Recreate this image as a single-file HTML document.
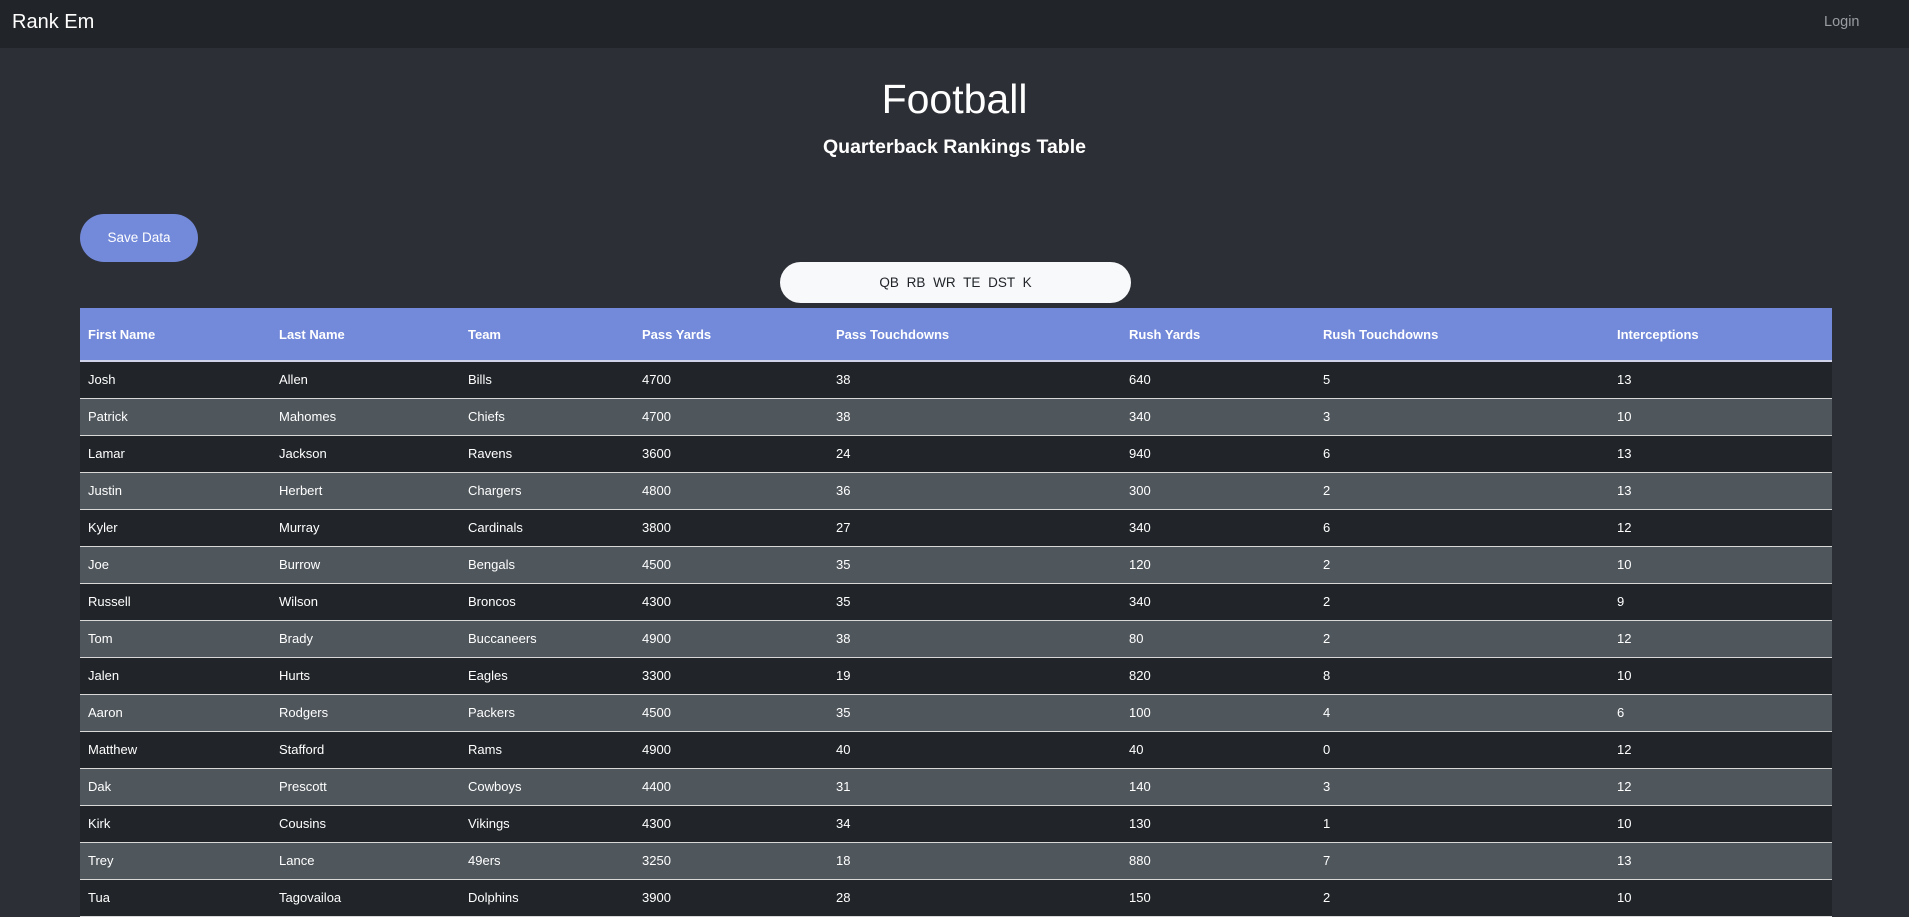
<!DOCTYPE html>
<html><head><meta charset="utf-8"><style>
*{box-sizing:border-box;margin:0;padding:0}
body{width:1909px;height:894px;overflow:hidden;background:#2c2f35;font-family:"Liberation Sans",sans-serif;color:#fff;position:relative}
.nav{height:48px;background:#212428;position:relative}
.brand{position:absolute;left:12px;top:11px;font-size:20px;color:#fff}
.login{position:absolute;left:1824px;top:14px;font-size:14.5px;color:#9a9da1}
h1{position:absolute;top:76px;width:100%;text-align:center;font-weight:400;font-size:41px}
h2{position:absolute;top:136px;width:100%;text-align:center;font-weight:700;font-size:19.5px}
.save{position:absolute;left:80px;top:214px;width:118px;height:48px;border-radius:24px;background:#7389d9;font-size:13.5px;text-align:center;line-height:48px}
.pill{position:absolute;left:780px;top:262px;width:351px;height:41px;border-radius:21px;background:#f8f9fa;color:#212529;font-size:13.5px;text-align:center;line-height:41px;word-spacing:4px}
table{position:absolute;left:80px;top:308px;width:1752px;border-collapse:collapse;font-size:13px}
th{background:#7389d9;height:53px;text-align:left;font-weight:700;padding:0 8px;border-bottom:2px solid #d0d4e8}
td{height:37px;padding:0 8px;border-bottom:1.5px solid #d8d8d8}
tr:nth-child(odd) td{background:#212529}
tr:nth-child(even) td{background:#4f565c}
</style></head><body>
<div class="nav"><span class="brand">Rank Em</span><span class="login">Login</span></div>
<h1>Football</h1>
<h2>Quarterback Rankings Table</h2>
<div class="save">Save Data</div>
<div class="pill">QB RB WR TE DST K</div>
<table>
<colgroup><col style="width:191px"><col style="width:189px"><col style="width:174px"><col style="width:194px"><col style="width:293px"><col style="width:194px"><col style="width:294px"><col style="width:223px"></colgroup>
<thead><tr><th>First Name</th><th>Last Name</th><th>Team</th><th>Pass Yards</th><th>Pass Touchdowns</th><th>Rush Yards</th><th>Rush Touchdowns</th><th>Interceptions</th></tr></thead>
<tbody>
<tr><td>Josh</td><td>Allen</td><td>Bills</td><td>4700</td><td>38</td><td>640</td><td>5</td><td>13</td></tr>
<tr><td>Patrick</td><td>Mahomes</td><td>Chiefs</td><td>4700</td><td>38</td><td>340</td><td>3</td><td>10</td></tr>
<tr><td>Lamar</td><td>Jackson</td><td>Ravens</td><td>3600</td><td>24</td><td>940</td><td>6</td><td>13</td></tr>
<tr><td>Justin</td><td>Herbert</td><td>Chargers</td><td>4800</td><td>36</td><td>300</td><td>2</td><td>13</td></tr>
<tr><td>Kyler</td><td>Murray</td><td>Cardinals</td><td>3800</td><td>27</td><td>340</td><td>6</td><td>12</td></tr>
<tr><td>Joe</td><td>Burrow</td><td>Bengals</td><td>4500</td><td>35</td><td>120</td><td>2</td><td>10</td></tr>
<tr><td>Russell</td><td>Wilson</td><td>Broncos</td><td>4300</td><td>35</td><td>340</td><td>2</td><td>9</td></tr>
<tr><td>Tom</td><td>Brady</td><td>Buccaneers</td><td>4900</td><td>38</td><td>80</td><td>2</td><td>12</td></tr>
<tr><td>Jalen</td><td>Hurts</td><td>Eagles</td><td>3300</td><td>19</td><td>820</td><td>8</td><td>10</td></tr>
<tr><td>Aaron</td><td>Rodgers</td><td>Packers</td><td>4500</td><td>35</td><td>100</td><td>4</td><td>6</td></tr>
<tr><td>Matthew</td><td>Stafford</td><td>Rams</td><td>4900</td><td>40</td><td>40</td><td>0</td><td>12</td></tr>
<tr><td>Dak</td><td>Prescott</td><td>Cowboys</td><td>4400</td><td>31</td><td>140</td><td>3</td><td>12</td></tr>
<tr><td>Kirk</td><td>Cousins</td><td>Vikings</td><td>4300</td><td>34</td><td>130</td><td>1</td><td>10</td></tr>
<tr><td>Trey</td><td>Lance</td><td>49ers</td><td>3250</td><td>18</td><td>880</td><td>7</td><td>13</td></tr>
<tr><td>Tua</td><td>Tagovailoa</td><td>Dolphins</td><td>3900</td><td>28</td><td>150</td><td>2</td><td>10</td></tr>
</tbody></table>
</body></html>
